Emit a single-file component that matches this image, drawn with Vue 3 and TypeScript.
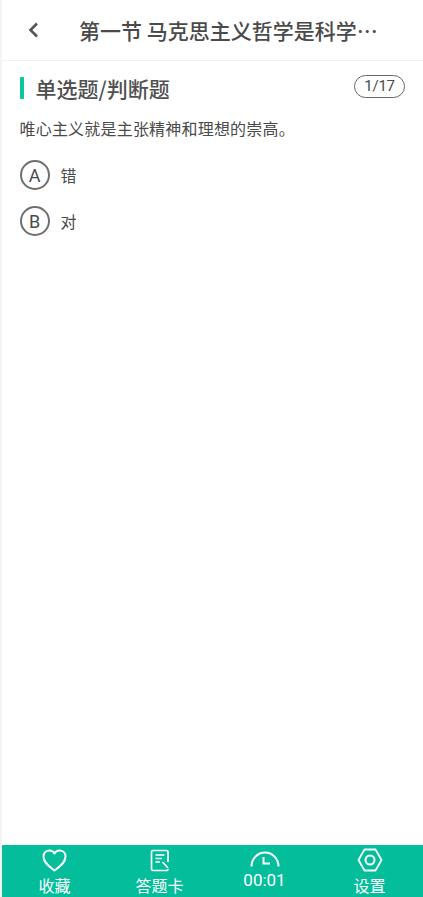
<script setup lang="ts">
const options = [
  { key: 'A', text: '错' },
  { key: 'B', text: '对' },
]
</script>

<template>
  <div class="page">
    <header class="nav">
      <svg class="back" width="12" height="18" viewBox="0 0 12 18"><path d="M10 2.500 L3.500 9 L10 15.500" fill="none" stroke="#555" stroke-width="2.6" /></svg>
      <div class="title">第一节 马克思主义哲学是科学…</div>
    </header>
    <main class="content">
      <div class="head">
        <span class="mark"></span>
        <span class="type">单选题/判断题</span>
        <span class="count">1/17</span>
      </div>
      <p class="question">唯心主义就是主张精神和理想的崇高。</p>
      <div v-for="o in options" :key="o.key" class="option">
        <span class="letter">{{ o.key }}</span>
        <span class="text">{{ o.text }}</span>
      </div>
    </main>
    <footer class="bar">
      <div class="item">
        <svg width="25" height="23" viewBox="0 0 25 23"><path d="M12.500 21.500 C8 18 1.500 14 1.500 7.500 C1.500 3.500 4.500 1.500 7.500 1.500 C9.500 1.500 11.500 2.500 12.500 4.500 C13.500 2.500 15.500 1.500 17.500 1.500 C20.500 1.500 23.500 3.500 23.500 7.500 C23.500 14 17 18 12.500 21.500 Z" fill="none" stroke="#fff" stroke-width="2" stroke-linejoin="round" /></svg>
        <span class="label">收藏</span>
      </div>
      <div class="item">
        <svg width="20" height="23" viewBox="0 0 20 23"><path d="M18 13 V3 Q18 1.500 16.500 1.500 H3 Q1.500 1.500 1.500 3 V20 Q1.500 21.500 3 21.500 H16 Q18 21.500 18 20 M5.500 6 H14.500 M5.500 9.500 H12 M5.500 13 H10 M12.500 13 L18 19" fill="none" stroke="#fff" stroke-width="1.7" /></svg>
        <span class="label">答题卡</span>
      </div>
      <div class="item timer">
        <svg width="30" height="16" viewBox="0 0 30 16"><path d="M1.500 15.500 A13.500 14 0 0 1 28.500 15.500 M13.500 6 V12.500 H20" fill="none" stroke="#fff" stroke-width="2" /></svg>
        <span class="label time">00:01</span>
      </div>
      <div class="item">
        <svg width="26" height="24" viewBox="0 0 26 24"><path d="M7.500 1.500 H18.500 L24.500 12 L18.500 22.500 H7.500 L1.500 12 Z" fill="none" stroke="#fff" stroke-width="1.8" stroke-linejoin="round" /><circle cx="13" cy="12" r="4.500" fill="none" stroke="#fff" stroke-width="2" /></svg>
        <span class="label">设置</span>
      </div>
    </footer>
  </div>
</template>

<style>
html, body { margin: 0; background: #f3f3f3; }
</style>

<style scoped>
.page {
  box-sizing: border-box;
  width: 421px;
  height: 897px;
  margin-left: 2px;
  background: #fff;
  display: flex;
  flex-direction: column;
  overflow: hidden;
  font-family: "Noto Sans CJK SC", "Noto Sans", sans-serif;
  color: #4a4a4a;
}
.nav {
  height: 60px;
  flex: none;
  border-bottom: 1px solid #f0f0f0;
  display: flex;
  align-items: center;
  padding-left: 25px;
}
.back { flex: none; }
.title {
  margin-left: 40px;
  font-size: 21px;
  font-weight: 500;
  white-space: nowrap;
}
.content { flex: 1; padding: 0 18px 0 17.5px; }
.head {
  display: flex;
  align-items: center;
  height: 54px;
}
.mark {
  width: 4px;
  height: 22px;
  border-radius: 1px;
  background: #09c8a0;
  margin-right: 12px;
}
.type { font-size: 21px; font-weight: 500; color: #505050; }
.count {
  box-sizing: border-box;
  margin-left: auto;
  margin-bottom: 4px;
  width: 51px;
  height: 23px;
  border: 1.5px solid #666;
  border-radius: 12px;
  font-family: Roboto, sans-serif;
  font-size: 15px;
  letter-spacing: -0.2px;
  line-height: 20px;
  text-align: center;
}
.question { margin: -1px 0 0; font-size: 16px; letter-spacing: 0.2px; line-height: 28px; }
.option {
  display: flex;
  align-items: center;
  height: 30px;
  margin-top: 17px;
}
.question + .option { margin-top: 18px; }
.letter {
  box-sizing: border-box;
  width: 30px;
  height: 30px;
  border: 2px solid #6e6e6e;
  border-radius: 50%;
  display: flex;
  align-items: center;
  justify-content: center;
  font-family: Roboto, sans-serif;
  font-size: 18px;
}
.text { margin-left: 11px; font-size: 16px; }
.option + .option { margin-top: 16px; }
.bar {
  flex: none;
  height: 52px;
  background: #04bd9b;
  display: grid;
  grid-template-columns: 105px 105px 105px 105px;
  color: #fff;
  overflow: hidden;
}
.item {
  display: flex;
  flex-direction: column;
  align-items: center;
  padding-top: 4px;
}
.item:last-child { padding-top: 3px; }
.label { font-size: 16px; line-height: 22px; margin-top: 2px; }
.timer { padding-top: 6px; }
.time { font-family: Roboto, sans-serif; font-size: 17px; margin-top: 2px; }
</style>
